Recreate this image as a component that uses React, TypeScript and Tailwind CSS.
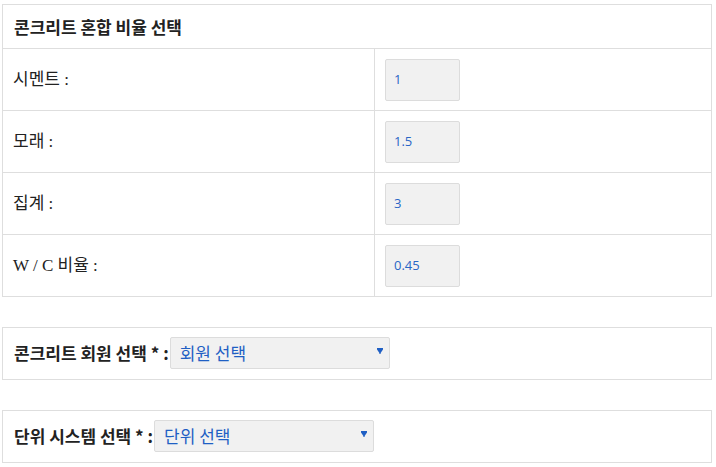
import React from "react";

const rows = [
  { label: "시멘트 :", value: "1" },
  { label: "모래 :", value: "1.5" },
  { label: "집계 :", value: "3" },
  { label: "W / C 비율 :", value: "0.45" },
];

function Arrow() {
  return (
    <svg width="6" height="6" viewBox="0 0 6 6" className="shrink-0">
      <path d="M0 0 H6 V1.5 L3.6 5 V6 H2.4 V5 L0 1.5 Z" fill="#1f5fc4" />
    </svg>
  );
}

function SelectBox({ text, width }: { text: string; width: string }) {
  return (
    <div
      className={`${width} h-[32px] flex items-center justify-between pl-[9px] pr-[6px] bg-[#f1f1f1] border border-[#dcdcdc] rounded-[2px] text-[#1f5fc4] text-[17px]`}
    >
      <span>{text}</span>
      <div className="mb-[4px]">
        <Arrow />
      </div>
    </div>
  );
}

export default function App() {
  const ko = { fontFamily: '"Noto Sans CJK KR", "Noto Sans", sans-serif' };
  const serif = { fontFamily: '"Liberation Serif", "Noto Sans CJK KR", serif' };
  return (
    <div className="w-[716px] h-[467px] bg-white pl-[2px] pr-[4px] pt-[4px] text-[#222]" style={ko}>
      <div className="border border-[#dedede]">
        <div className="h-[44px] border-b border-[#dedede] flex items-center pl-[11px] text-[17px] font-bold">
          콘크리트 혼합 비율 선택
        </div>
        {rows.map((r, i) => (
          <div
            key={r.label}
            className={`flex ${i < rows.length - 1 ? "h-[62px] border-b" : "h-[61px]"} border-[#dedede]`}
          >
            <div
              className="w-[372px] border-r border-[#dedede] flex items-center pl-[10px] text-[17px]"
              style={serif}
            >
              {r.label}
            </div>
            <div className="flex-1 pl-[10px] pt-[10px]">
              <div
                className="w-[75px] h-[42px] bg-[#f1f1f1] border border-[#dcdcdc] rounded-[2px] flex items-center pl-[8px] text-[13px] text-[#2a66c6]"
                style={{ fontFamily: '"Open Sans", sans-serif' }}
              >
                {r.value}
              </div>
            </div>
          </div>
        ))}
      </div>

      <div className="mt-[30px] h-[53px] border border-[#dedede] flex items-center pl-[11px] pb-[1px]">
        <span className="text-[17px] font-bold mr-[1px]">콘크리트 회원 선택 * :</span>
        <SelectBox text="회원 선택" width="w-[220px]" />
      </div>

      <div className="mt-[30px] h-[53px] border border-[#dedede] flex items-center pl-[11px] pb-[1px]">
        <span className="text-[17px] font-bold mr-[1px]">단위 시스템 선택 * :</span>
        <SelectBox text="단위 선택" width="w-[220px]" />
      </div>
    </div>
  );
}
